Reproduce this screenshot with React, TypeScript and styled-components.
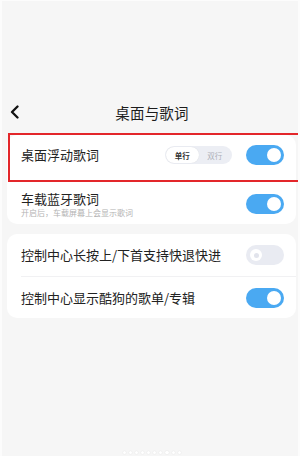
import React from "react";
import styled, { createGlobalStyle } from "styled-components";

const Global = createGlobalStyle`
  html, body { margin: 0; padding: 0; background: #f6f6f6; }
  body { font-family: "Noto Sans CJK SC", "Noto Sans", sans-serif; }
`;

const Page = styled.div`
  box-sizing: border-box;
  width: 300px;
  height: 456px;
  background: #f6f6f6;
  border-left: 2px solid #fcfcfc;
  border-right: 2px solid #fcfcfc;
  border-top: 1px solid #fcfcfc;
  padding-top: 97px;
  display: flex;
  flex-direction: column;
  position: relative;
  overflow: hidden;
`;

const Header = styled.div`
  height: 28px;
  display: grid;
  grid-template-columns: 1fr auto 1fr;
  align-items: center;
`;

const Back = styled.div`
  padding-left: 8px;
  display: flex;
  align-items: center;
`;

const Title = styled.div`
  font-size: 14.5px;
  font-weight: 400;
  color: #1c1c1c;
  margin-left: 4px;
  letter-spacing: 0.2px;
`;

const Card = styled.div<{ $top: number }>`
  margin: ${(p) => p.$top}px 2px 0 5px;
  background: #ffffff;
  border-radius: 10px;
  display: flex;
  flex-direction: column;
`;

const Row = styled.div<{ $h?: number; $pt?: number; $pb?: number; $highlight?: boolean }>`
  position: relative;
  box-sizing: border-box;
  ${(p) => (p.$h ? `height: ${p.$h}px;` : "")}
  padding: ${(p) => p.$pt ?? 0}px 12px ${(p) => p.$pb ?? 0}px 14px;
  display: flex;
  align-items: center;
  gap: 14px;
  ${(p) =>
    p.$highlight
      ? `&::after {
          content: "";
          position: absolute;
          left: 1px;
          right: -6px;
          top: -2px;
          bottom: -7px;
          border: 2px solid #e3262a;
          pointer-events: none;
        }`
      : ""}
`;

const Divider = styled.div`
  height: 1px;
  background: #f1f1f3;
  margin-left: 14px;
`;

const TextCol = styled.div`
  flex: 1;
  display: flex;
  flex-direction: column;
  min-width: 0;
`;

const Label = styled.div`
  font-size: 13px;
  line-height: 18px;
  color: #222;
  white-space: nowrap;
`;

const Sub = styled.div`
  font-size: 8px;
  line-height: 10px;
  color: #b3b3b3;
  white-space: nowrap;
`;

const Segment = styled.div`
  width: 67px;
  height: 18px;
  box-sizing: border-box;
  border-radius: 9px;
  background: #eceef4;
  display: flex;
  align-items: center;
  padding: 1px;
`;

const SegItem = styled.div<{ $active?: boolean }>`
  flex: 1;
  height: 16px;
  border-radius: 8px;
  display: flex;
  align-items: center;
  justify-content: center;
  font-size: 7.5px;
  font-weight: ${(p) => (p.$active ? 700 : 400)};
  color: ${(p) => (p.$active ? "#333" : "#aeb0b8")};
  background: ${(p) => (p.$active ? "#fff" : "transparent")};
  box-shadow: ${(p) => (p.$active ? "0 0 1px rgba(0,0,0,0.12)" : "none")};
`;

const Toggle = styled.div<{ $on: boolean }>`
  flex: none;
  width: 38px;
  height: 20px;
  border-radius: 10px;
  background: ${(p) => (p.$on ? "#4aa9f2" : "#e9ebf2")};
  display: flex;
  align-items: center;
  justify-content: ${(p) => (p.$on ? "flex-end" : "flex-start")};
  padding: 0 3px;
  box-sizing: border-box;
`;

const Knob = styled.div<{ $on: boolean }>`
  width: ${(p) => (p.$on ? 14 : 12)}px;
  height: ${(p) => (p.$on ? 14 : 12)}px;
  border-radius: 50%;
  background: #fff;
  margin-left: ${(p) => (p.$on ? 0 : 1)}px;
  display: flex;
  align-items: center;
  justify-content: center;
  &::after {
    content: "";
    display: ${(p) => (p.$on ? "none" : "block")};
    width: 5px;
    height: 5px;
    border-radius: 50%;
    background: #e2e4ec;
  }
`;

const Dots = styled.div`
  position: absolute;
  left: 121px;
  bottom: 2px;
  display: flex;
  gap: 3px;
  align-items: center;
`;

const Dot = styled.div<{ $active?: boolean }>`
  width: ${(p) => (p.$active ? 4 : 3)}px;
  height: 3px;
  border-radius: 2px;
  background: #ffffff;
  box-shadow: 0 0 1.5px rgba(0, 0, 0, 0.12);
`;

const Switch = ({ on }: { on: boolean }) => (
  <Toggle $on={on}>
    <Knob $on={on} />
  </Toggle>
);

export default function App() {
  return (
    <>
      <Global />
      <Page>
        <Header>
          <Back>
            <svg width="10" height="14" viewBox="0 0 10 14">
              <path d="M7.5 1.5 L2 7 L7.5 12.5" fill="none" stroke="#111" strokeWidth="2.3" strokeLinecap="round" strokeLinejoin="round" />
            </svg>
          </Back>
          <Title>桌面与歌词</Title>
          <div />
        </Header>

        <Card $top={9}>
          <Row $h={40} $highlight>
            <TextCol>
              <Label>桌面浮动歌词</Label>
            </TextCol>
            <Segment>
              <SegItem $active>单行</SegItem>
              <SegItem>双行</SegItem>
            </Segment>
            <Switch on />
          </Row>
          <Row $pt={15} $pb={6}>
            <TextCol>
              <Label>车载蓝牙歌词</Label>
              <Sub>开启后，车载屏幕上会显示歌词</Sub>
            </TextCol>
            <Switch on />
          </Row>
        </Card>

        <Card $top={10}>
          <Row $h={42}>
            <TextCol>
              <Label>控制中心长按上/下首支持快退快进</Label>
            </TextCol>
            <Switch on={false} />
          </Row>
          <Divider />
          <Row $h={41}>
            <TextCol>
              <Label>控制中心显示酷狗的歌单/专辑</Label>
            </TextCol>
            <Switch on />
          </Row>
        </Card>

        <Dots>
          {Array.from({ length: 10 }).map((_, i) => (
            <Dot key={i} $active={i === 7} />
          ))}
        </Dots>
      </Page>
    </>
  );
}
